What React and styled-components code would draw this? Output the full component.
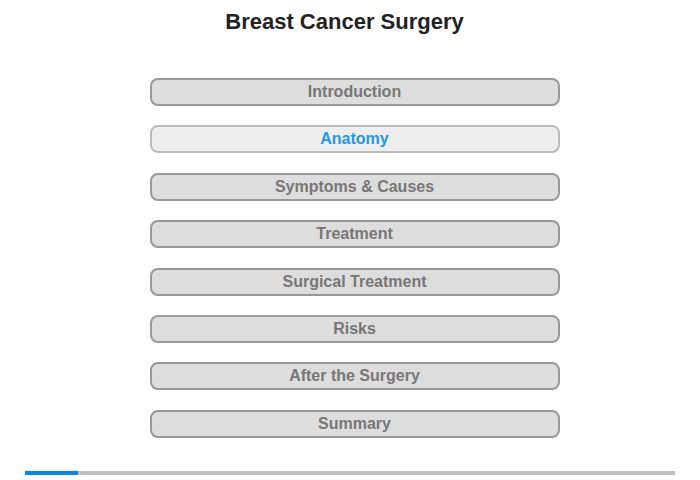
import React from 'react'
import styled, { createGlobalStyle } from 'styled-components'

const GlobalStyle = createGlobalStyle`
  html, body {
    margin: 0;
    padding: 0;
    background: #ffffff;
    font-family: "Liberation Sans", Arial, sans-serif;
  }
`

const Page = styled.div`
  width: 700px;
  height: 480px;
  display: flex;
  flex-direction: column;
  align-items: center;
  box-sizing: border-box;
`

const Title = styled.h1`
  margin: 9px 11px 0 0;
  font-size: 22px;
  line-height: 26px;
  font-weight: bold;
  color: #222222;
`

const Menu = styled.nav`
  margin: 43px 0 0 9px;
  display: flex;
  flex-direction: column;
  gap: 19.4px;
  width: 410px;
`

const MenuButton = styled.button`
  height: 28px;
  width: 100%;
  box-sizing: border-box;
  border-radius: 8px;
  border: 2px solid ${p => (p.$active ? '#bbbbbb' : '#999999')};
  background: ${p => (p.$active ? '#eeeeee' : '#dddddd')};
  color: ${p => (p.$active ? '#2196f3' : '#777777')};
  font-family: "Liberation Sans", Arial, sans-serif;
  font-size: 16px;
  font-weight: bold;
  padding: 0;
  cursor: pointer;
`

const Progress = styled.div`
  margin-top: auto;
  margin-bottom: 5px;
  width: 650px;
  height: 4px;
  background: #c0c0c0;
`

const ProgressFill = styled.div`
  height: 100%;
  background: #0088ee;
`

const items = [
  'Introduction',
  'Anatomy',
  'Symptoms & Causes',
  'Treatment',
  'Surgical Treatment',
  'Risks',
  'After the Surgery',
  'Summary',
]

export default function App() {
  return (
    <>
      <GlobalStyle />
      <Page>
        <Title>Breast Cancer Surgery</Title>
        <Menu>
          {items.map((label, i) => (
            <MenuButton key={label} $active={i === 1}>{label}</MenuButton>
          ))}
        </Menu>
        <Progress>
          <ProgressFill style={{ width: `${(53 / 650) * 100}%` }} />
        </Progress>
      </Page>
    </>
  )
}
